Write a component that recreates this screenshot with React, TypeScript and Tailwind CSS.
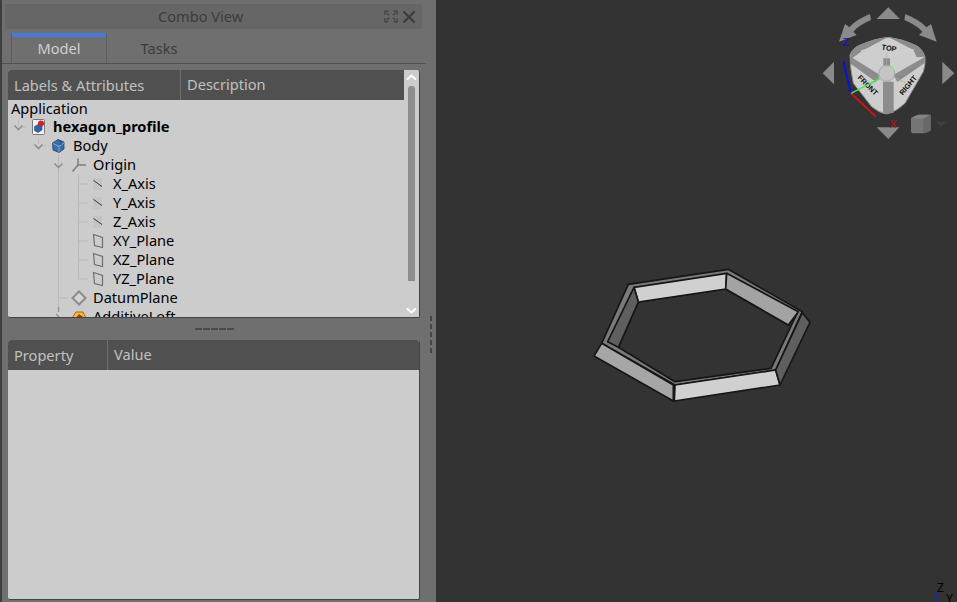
const Branch = ({kind}: {kind: string}) => (
  <svg width="20" height="19" viewBox="0 0 20 19" className="shrink-0">
    {(kind === 'line' || kind === 'tee' || kind === 'open') && <path d="M10.5 0V19" stroke="#b9b9b9" fill="none"/>}
    {kind === 'elbow' && <path d="M10.5 0V10H20" stroke="#b9b9b9" fill="none"/>}
    {kind === 'tee' && <path d="M10.5 10H20" stroke="#b9b9b9" fill="none"/>}
    {kind === 'openroot' && <path d="M10.5 3V8M13 10H18" stroke="#b9b9b9" fill="none"/>}
    {(kind === 'open' || kind === 'openroot') && <path d="M6.5 8.5L10.5 12.5L14.5 8.5" stroke="#8f8f8f" strokeWidth="1.6" fill="none"/>}
    {kind === 'closed' && <path d="M10.5 0V5M8 7L12 11L8 15" stroke="#8f8f8f" strokeWidth="1.3" fill="none"/>}
  </svg>
);

const TreeIcon = ({name}: {name: string}) => (
  <svg width="16" height="16" viewBox="0 0 16 16" className="shrink-0">
    {name === 'doc' && (
      <g>
        <rect x="1.5" y="0.5" width="12" height="15" rx="1" fill="#f2f2f2" stroke="#777"/>
        <path d="M3.5 7.500L8 5L11 6.500V11L7 13.500L3.500 11.500Z" fill="#2f66a8" stroke="#1d3f70" strokeWidth="0.6"/>
        <circle cx="10" cy="4.500" r="3" fill="#d0202a"/>
      </g>
    )}
    {name === 'body' && (
      <g>
        <path d="M1.500 5L7 1.500L13 4V11L8 14.500L2 12Z" fill="#3a6ea8" stroke="#1f466f" strokeWidth="0.8"/>
        <path d="M2 5.500L8 8.500V14M8 8.500L13 5" stroke="#86add6" strokeWidth="1" fill="none"/>
        <path d="M7 2L10 3.500V7" stroke="#1f466f" strokeWidth="0.8" fill="none"/>
      </g>
    )}
    {name === 'origin' && <path d="M7 8L7 1.500M7 8L1.500 14.500M7 8H15" stroke="#7c7c7c" strokeWidth="1.500" fill="none"/>}
    {name === 'axis' && (
      <g>
        <rect x="2" y="2" width="9" height="12" fill="#c4c4c4"/>
        <path d="M2.500 4.500L11 10.500" stroke="#3a3a3a" strokeWidth="1" fill="none"/>
      </g>
    )}
    {name === 'plane' && <path d="M2.500 1.500L11.500 4.500V14.500L3.500 12.500Z" fill="none" stroke="#6e6e6e" strokeWidth="1.200"/>}
    {name === 'datum' && <path d="M8 1.500L14.500 8L8 14.500L1.500 8Z" fill="#d4d4d4" stroke="#8b8b8b" strokeWidth="2"/>}
    {name === 'loft' && (
      <g>
        <path d="M1 9L5 3H12L15 9V15H1Z" fill="#f0c420" stroke="#8a3a10" strokeWidth="0.7"/>
        <path d="M5 9L8 5L12 8L10 12Z" fill="#d02020"/>
        <rect x="9" y="10" width="5" height="4" fill="#30b030"/>
      </g>
    )}
  </svg>
);

const rows = [
  {cells: ['openroot'], icon: 'doc', label: 'hexagon_profile', bold: true},
  {cells: ['none', 'openroot'], icon: 'body', label: 'Body'},
  {cells: ['none', 'none', 'open'], icon: 'origin', label: 'Origin'},
  {cells: ['none', 'none', 'line', 'tee'], icon: 'axis', label: 'X_Axis'},
  {cells: ['none', 'none', 'line', 'tee'], icon: 'axis', label: 'Y_Axis'},
  {cells: ['none', 'none', 'line', 'tee'], icon: 'axis', label: 'Z_Axis'},
  {cells: ['none', 'none', 'line', 'tee'], icon: 'plane', label: 'XY_Plane'},
  {cells: ['none', 'none', 'line', 'tee'], icon: 'plane', label: 'XZ_Plane'},
  {cells: ['none', 'none', 'line', 'elbow'], icon: 'plane', label: 'YZ_Plane'},
  {cells: ['none', 'none', 'tee'], icon: 'datum', label: 'DatumPlane'},
  {cells: ['none', 'none', 'closed'], icon: 'loft', label: 'AdditiveLoft'},
];

const TreeRow = ({row}: {row: typeof rows[number]}) => (
  <div className="flex h-[19px] shrink-0 items-center">
    {row.cells.map((c, i) => <Branch key={i} kind={c}/>)}
    <span className="ml-[3px] flex"><TreeIcon name={row.icon}/></span>
    <span className={row.bold ? 'ml-[6px] font-bold text-black whitespace-nowrap' : 'ml-[6px] text-black whitespace-nowrap'}>{row.label}</span>
  </div>
);

const Scrollbar = () => (
  <div className="absolute right-0 top-0 bottom-0 flex w-[15px] flex-col items-center bg-[#cccccc]">
    <svg width="11" height="7" viewBox="0 0 11 7" className="mt-[4px] shrink-0">
      <path d="M1 5.500L5.500 1.500L10 5.500" stroke="#ffffff" strokeWidth="2" fill="none"/>
    </svg>
    <div className="mt-[5px] h-[195px] w-[7px] rounded-t-[3px] bg-[#8d8d8d]"/>
    <div className="flex-1"/>
    <svg width="11" height="7" viewBox="0 0 11 7" className="mb-[3px] shrink-0">
      <path d="M1 1.500L5.500 5.500L10 1.500" stroke="#ffffff" strokeWidth="2" fill="none"/>
    </svg>
  </div>
);

const Viewport = () => (
  <div className="relative flex-1 bg-[#333333]">
    <svg viewBox="436 0 521 602" className="h-full w-full">
      <g transform="translate(585 260) scale(0.33333)" stroke="#161616" strokeWidth="5" strokeLinejoin="round">
        {/* rim around the hole */}
        <path fillRule="evenodd" fill="#7a7a7a" d="M130 73L430 28L652 155L572 330L270 375L50 250ZM160 126L422 87L610 195L636 160L558 325L270 365L100 262Z"/>
        {/* sloped faces */}
        <path d="M147 82L425 40L422 87L160 126Z" fill="#d0d0d0"/>
        <path d="M425 40L640 155L610 195L422 87Z" fill="#a3a3a3"/>
        <path d="M147 82L160 126L100 262L68 245Z" fill="#5f5f5f"/>
        <path d="M50 250L265 375V423L27 288Z" fill="#a6a6a6"/>
        <path d="M270 375L572 330L585 375L268 423Z" fill="#d0d0d0"/>
        <path d="M652 158L675 187L585 375L572 330Z" fill="#5f5f5f"/>
      </g>
    </svg>
    <svg viewBox="0 0 426 435" className="absolute left-[379px] top-0 h-[145px] w-[142px]">
      <g fill="#8a8a8a">
        <path d="M185 57H255L220 22Z"/>
        <path d="M185 382H253L220 417Z"/>
        <path d="M23 220L57 185V253Z"/>
        <path d="M382 185V253L418 220Z"/>
        <path d="M165 42C140 52 118 65 103 82L90 72L72 125L125 105L115 95C128 80 148 68 168 60Z"/>
        <path d="M271 42C296 52 318 65 335 82L348 72L365 125L312 105L322 95C308 80 288 68 268 60Z"/>
      </g>
      <path d="M105 165Q112 145 135 135Q180 115 220 112Q265 118 300 135Q322 145 330 170Q332 195 325 215L270 310Q245 335 215 342Q190 338 170 320L115 250Q105 205 105 165Z" fill="#cecece" stroke="#8a8a8a" strokeWidth="3"/>
      <g fill="#8c8c8c">
        <path d="M107 165Q112 145 135 135Q175 118 218 112L142 152L107 178Z"/>
        <path d="M222 112Q265 118 300 135Q322 145 330 170L305 172L295 150Z"/>
        <path d="M205 165H225V200H205Z"/>
        <path d="M107 170L195 225L183 246L108 192Z"/>
        <path d="M330 170L235 225L247 246L328 190Z"/>
        <path d="M204 245H236V338L215 342L204 335Z"/>
      </g>
      <path d="M135 152L218 125L300 150L225 175H205Z" fill="#cecece"/>
      <circle cx="215" cy="220" r="24" fill="#c4c4c4" stroke="#a8a8a8" strokeWidth="3"/>
      <path d="M215 160V200M195 235L165 255M238 232L275 250" stroke="#aaaaaa" strokeWidth="2" fill="none"/>
      <path d="M228 198L240 200M234 200L233 218" stroke="#90ee90" strokeWidth="3" fill="none"/>
      <text x="222" y="152" textAnchor="middle" fontSize="22" fontWeight="700" fill="#111111" fontFamily="'Liberation Sans', sans-serif" transform="rotate(8 222 146)">TOP</text>
      <text x="156" y="262" textAnchor="middle" fontSize="22" fontWeight="700" fill="#111111" fontFamily="'Liberation Sans', sans-serif" transform="rotate(45 156 258)">FRONT</text>
      <text x="282" y="262" textAnchor="middle" fontSize="22" fontWeight="700" fill="#111111" fontFamily="'Liberation Sans', sans-serif" transform="rotate(-50 282 258)">RIGHT</text>
      <path d="M85 183L108 280" stroke="#0a10d8" strokeWidth="6"/>
      <path d="M108 280L183 350" stroke="#e01010" strokeWidth="5"/>
      <path d="M108 280L195 235" stroke="#50e050" strokeWidth="4"/>
      <text x="92" y="138" textAnchor="middle" fontSize="34" fill="#1010d0" fontFamily="'Liberation Sans', sans-serif">Z</text>
      <text x="235" y="383" textAnchor="middle" fontSize="32" fill="#c01010" fontFamily="'Liberation Sans', sans-serif">X</text>
      <path d="M288 355Q290 350 310 344H340Q347 345 347 352V390Q347 395 325 400H295Q288 400 288 392Z" fill="#757575"/>
      <path d="M288 355L310 344H347L325 356Z" fill="#858585"/>
      <path d="M325 356L347 344V392L325 400Z" fill="#686868"/>
      <path d="M362 365H395L378 382Z" fill="#3f3f3f"/>
    </svg>
    <div className="absolute left-[499px] top-[592px] h-[10px] w-[2px] bg-[#1c2a9a]"/>
    <span className="absolute left-[501px] top-[581px] text-[12px] leading-[14px] text-black">Z</span>
    <span className="absolute left-[510px] top-[592px] text-[12px] leading-[14px] text-black">Y</span>
  </div>
);

export default function App() {
  return (
    <div className="flex h-[602px] w-[957px] overflow-hidden font-['Noto_Sans','Open_Sans',sans-serif] text-[14.6px]">
      <aside className="relative flex w-[436px] shrink-0 flex-col border-l-2 border-[#3f3f3f] bg-[#6f6f6f]">
        <div className="ml-[3px] mt-[4px] flex h-[25px] w-[417px] shrink-0 items-center rounded-[2px] bg-[#666666]">
          <span className="ml-[153px] text-[#3c3c3c]">Combo View</span>
          <svg width="14" height="13" viewBox="0 0 16 14" className="ml-[141px]">
            <path d="M1 5V1H5M11 1H15V5M1 9V13H5M11 13H15V9M3 3L6 5.500M13 3L10 5.500M3 11L6 8.500M13 11L10 8.500" stroke="#434343" strokeWidth="1.500" fill="none"/>
          </svg>
          <svg width="14" height="14" viewBox="0 0 14 14" className="ml-[4px]">
            <path d="M1.500 1.500L12.500 12.500M12.500 1.500L1.500 12.500" stroke="#3c3c3c" strokeWidth="2.200" fill="none"/>
          </svg>
        </div>
        <div className="mt-[4px] flex h-[31px] w-[424px] shrink-0 border-b border-[#505050]">
          <div className="ml-[9px] flex w-[96px] flex-col border-x border-[#5c5c5c] text-center">
            <div className="h-[4px] bg-[#4a78d8]"/>
            <span className="leading-[22px] text-[#d0d0d0]">Model</span>
          </div>
          <div className="w-[104px] pt-[4px] text-center leading-[22px] text-[#3c3c3c]">Tasks</div>
        </div>
        <div className="relative ml-[6px] mt-[6px] h-[248px] w-[412px] shrink-0 overflow-hidden rounded-t-[3px] rounded-b-[2px] border-r border-b border-[#444444] bg-[#cccccc]">
          <div className="flex h-[30px] w-[396px] items-center bg-[#505050] text-[#c0c0c0]">
            <span className="w-[173px] border-r border-[#6e6e6e] pl-[6px] leading-[30px]">Labels &amp; Attributes</span>
            <span className="pl-[6px]">Description</span>
          </div>
          <div className="flex h-[17px] items-center pl-[3px] text-black">Application</div>
          {rows.map(r => <TreeRow key={r.label} row={r}/>)}
          <Scrollbar/>
        </div>
        <div className="ml-[6px] flex h-[22px] w-[412px] shrink-0 items-center justify-center gap-[1px] pb-[1px]">
          {[0, 1, 2, 3, 4].map(i => <div key={i} className="h-[2px] w-[7px] bg-[#4a4a4a]"/>)}
        </div>
        <div className="ml-[6px] h-[260px] w-[412px] shrink-0 overflow-hidden rounded-t-[3px] rounded-b-[2px] border-r border-b border-[#444444] bg-[#cccccc]">
          <div className="flex h-[30px] items-center bg-[#505050] text-[#c0c0c0]">
            <span className="w-[100px] border-r border-[#6e6e6e] pl-[6px] leading-[30px]">Property</span>
            <span className="pl-[6px]">Value</span>
          </div>
        </div>
        <div className="absolute left-[428px] top-[316px] flex flex-col gap-[3px]">
          {[0, 1, 2, 3, 4].map(i => <div key={i} className="h-[5px] w-[2px] bg-[#454545]"/>)}
        </div>
      </aside>
      <Viewport/>
    </div>
  );
}
